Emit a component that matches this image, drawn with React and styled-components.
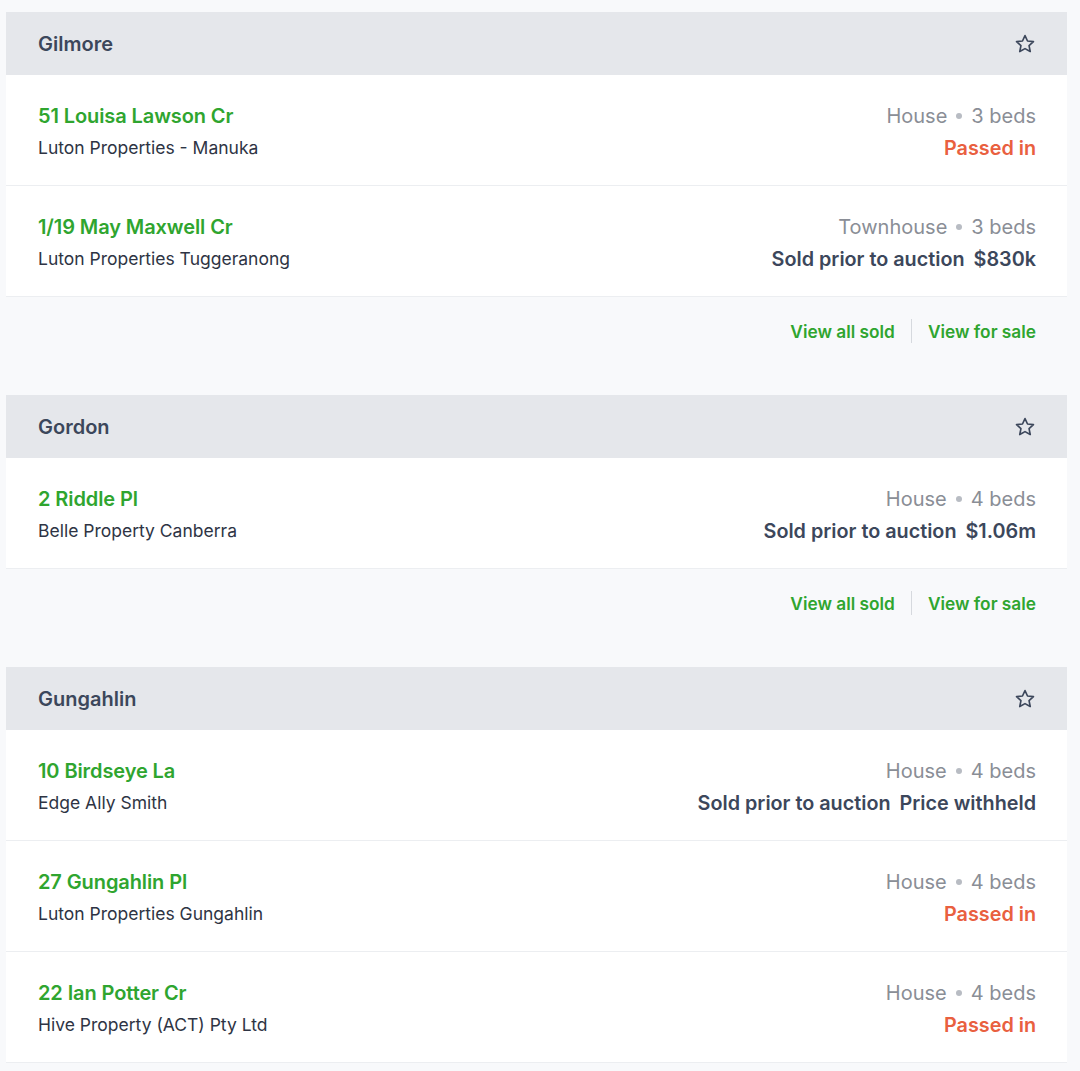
import React from "react";
import styled, { createGlobalStyle } from "styled-components";

const GlobalStyle = createGlobalStyle`
  body {
    margin: 0;
    background: #f8f9fb;
    font-family: Inter, "Open Sans", Arial, sans-serif;
    color: #3c475b;
  }
`;

const suburbs = [
  {
    name: "Gilmore",
    listings: [
      { address: "51 Louisa Lawson Cr", agency: "Luton Properties - Manuka", type: "House", beds: 3, status: "passed" },
      { address: "1/19 May Maxwell Cr", agency: "Luton Properties Tuggeranong", type: "Townhouse", beds: 3, status: "sold", price: "$830k" },
    ],
    footer: true,
  },
  {
    name: "Gordon",
    listings: [
      { address: "2 Riddle Pl", agency: "Belle Property Canberra", type: "House", beds: 4, status: "sold", price: "$1.06m" },
    ],
    footer: true,
  },
  {
    name: "Gungahlin",
    listings: [
      { address: "10 Birdseye La", agency: "Edge Ally Smith", type: "House", beds: 4, status: "sold", price: "Price withheld" },
      { address: "27 Gungahlin Pl", agency: "Luton Properties Gungahlin", type: "House", beds: 4, status: "passed" },
      { address: "22 Ian Potter Cr", agency: "Hive Property (ACT) Pty Ltd", type: "House", beds: 4, status: "passed" },
    ],
  },
];

const Page = styled.div`
  padding: 12px 13px 0 6px;
`;

const Section = styled.section`
  margin-bottom: 32px;
`;

const Header = styled.div`
  height: 63px;
  background: #e5e7eb;
  display: flex;
  align-items: center;
  justify-content: space-between;
  padding: 0 32px;
`;

const SuburbName = styled.h2`
  margin: 0;
  font-size: 20px;
  font-weight: 600;
  color: #3c475b;
`;

const StarButton = styled.button`
  border: 0;
  background: none;
  padding: 0;
  display: flex;
  color: #3c475b;
  margin-right: -1px;
`;

const Row = styled.div`
  background: #fff;
  display: flex;
  justify-content: space-between;
  padding: 27px 31px 25px 32px;
  border-bottom: 1px solid #eceef1;
`;

const Col = styled.div`
  display: flex;
  flex-direction: column;
  align-items: ${(p) => (p.$right ? "flex-end" : "flex-start")};
  gap: 4px;
`;

const Address = styled.a`
  font-size: 20px;
  line-height: 28px;
  font-weight: 600;
  color: #2fa52f;
  text-decoration: none;
  letter-spacing: -0.1px;
`;

const Agency = styled.div`
  font-size: 17.5px;
  line-height: 24px;
  color: #2e3444;
  margin-top: 2px;
`;

const Meta = styled.div`
  font-size: 20px;
  line-height: 28px;
  color: #8a8e96;
  display: flex;
  align-items: center;
  gap: 9px;
`;

const Dot = styled.span`
  width: 6px;
  height: 6px;
  border-radius: 50%;
  background: #b8bcc3;
`;

const Status = styled.div`
  font-size: 19.8px;
  line-height: 24px;
  margin-top: 2px;
  font-weight: 600;
  color: ${(p) => (p.$passed ? "#e9603f" : "#3c475b")};
  display: flex;
  gap: 9px;
`;

const Footer = styled.div`
  height: 66px;
  padding-top: 2px;
  box-sizing: border-box;
  display: flex;
  align-items: center;
  justify-content: flex-end;
  padding-right: 31px;
`;

const FooterLink = styled.a`
  font-size: 17.3px;
  font-weight: 600;
  color: #2fa52f;
  text-decoration: none;
`;

const Divider = styled.span`
  width: 1px;
  height: 24px;
  background: #d6d9de;
  margin: 0 16px;
`;

const Star = () => (
  <svg width="22" height="22" viewBox="0 0 24 24" fill="none" stroke="currentColor" strokeWidth="1.8" strokeLinejoin="round">
    <path d="M12 2.8l2.75 5.9 6.45.75-4.78 4.4 1.28 6.370L12 17.02l-5.7 3.2 1.28-6.37L2.8 9.45l6.45-.75z" />
  </svg>
);

const Listing = ({ item }) => (
  <Row>
    <Col>
      <Address href="#">{item.address}</Address>
      <Agency>{item.agency}</Agency>
    </Col>
    <Col $right>
      <Meta>
        {item.type}
        <Dot />
        {item.beds} beds
      </Meta>
      {item.status === "passed" ? (
        <Status $passed>Passed in</Status>
      ) : (
        <Status>
          <span>Sold prior to auction</span>
          <span>{item.price}</span>
        </Status>
      )}
    </Col>
  </Row>
);

export default function App() {
  return (
    <Page>
      <GlobalStyle />
      {suburbs.map((s) => (
        <Section key={s.name}>
          <Header>
            <SuburbName>{s.name}</SuburbName>
            <StarButton>
              <Star />
            </StarButton>
          </Header>
          {s.listings.map((l) => (
            <Listing key={l.address} item={l} />
          ))}
          {s.footer && (
            <Footer>
              <FooterLink href="#">View all sold</FooterLink>
              <Divider />
              <FooterLink href="#">View for sale</FooterLink>
            </Footer>
          )}
        </Section>
      ))}
    </Page>
  );
}
